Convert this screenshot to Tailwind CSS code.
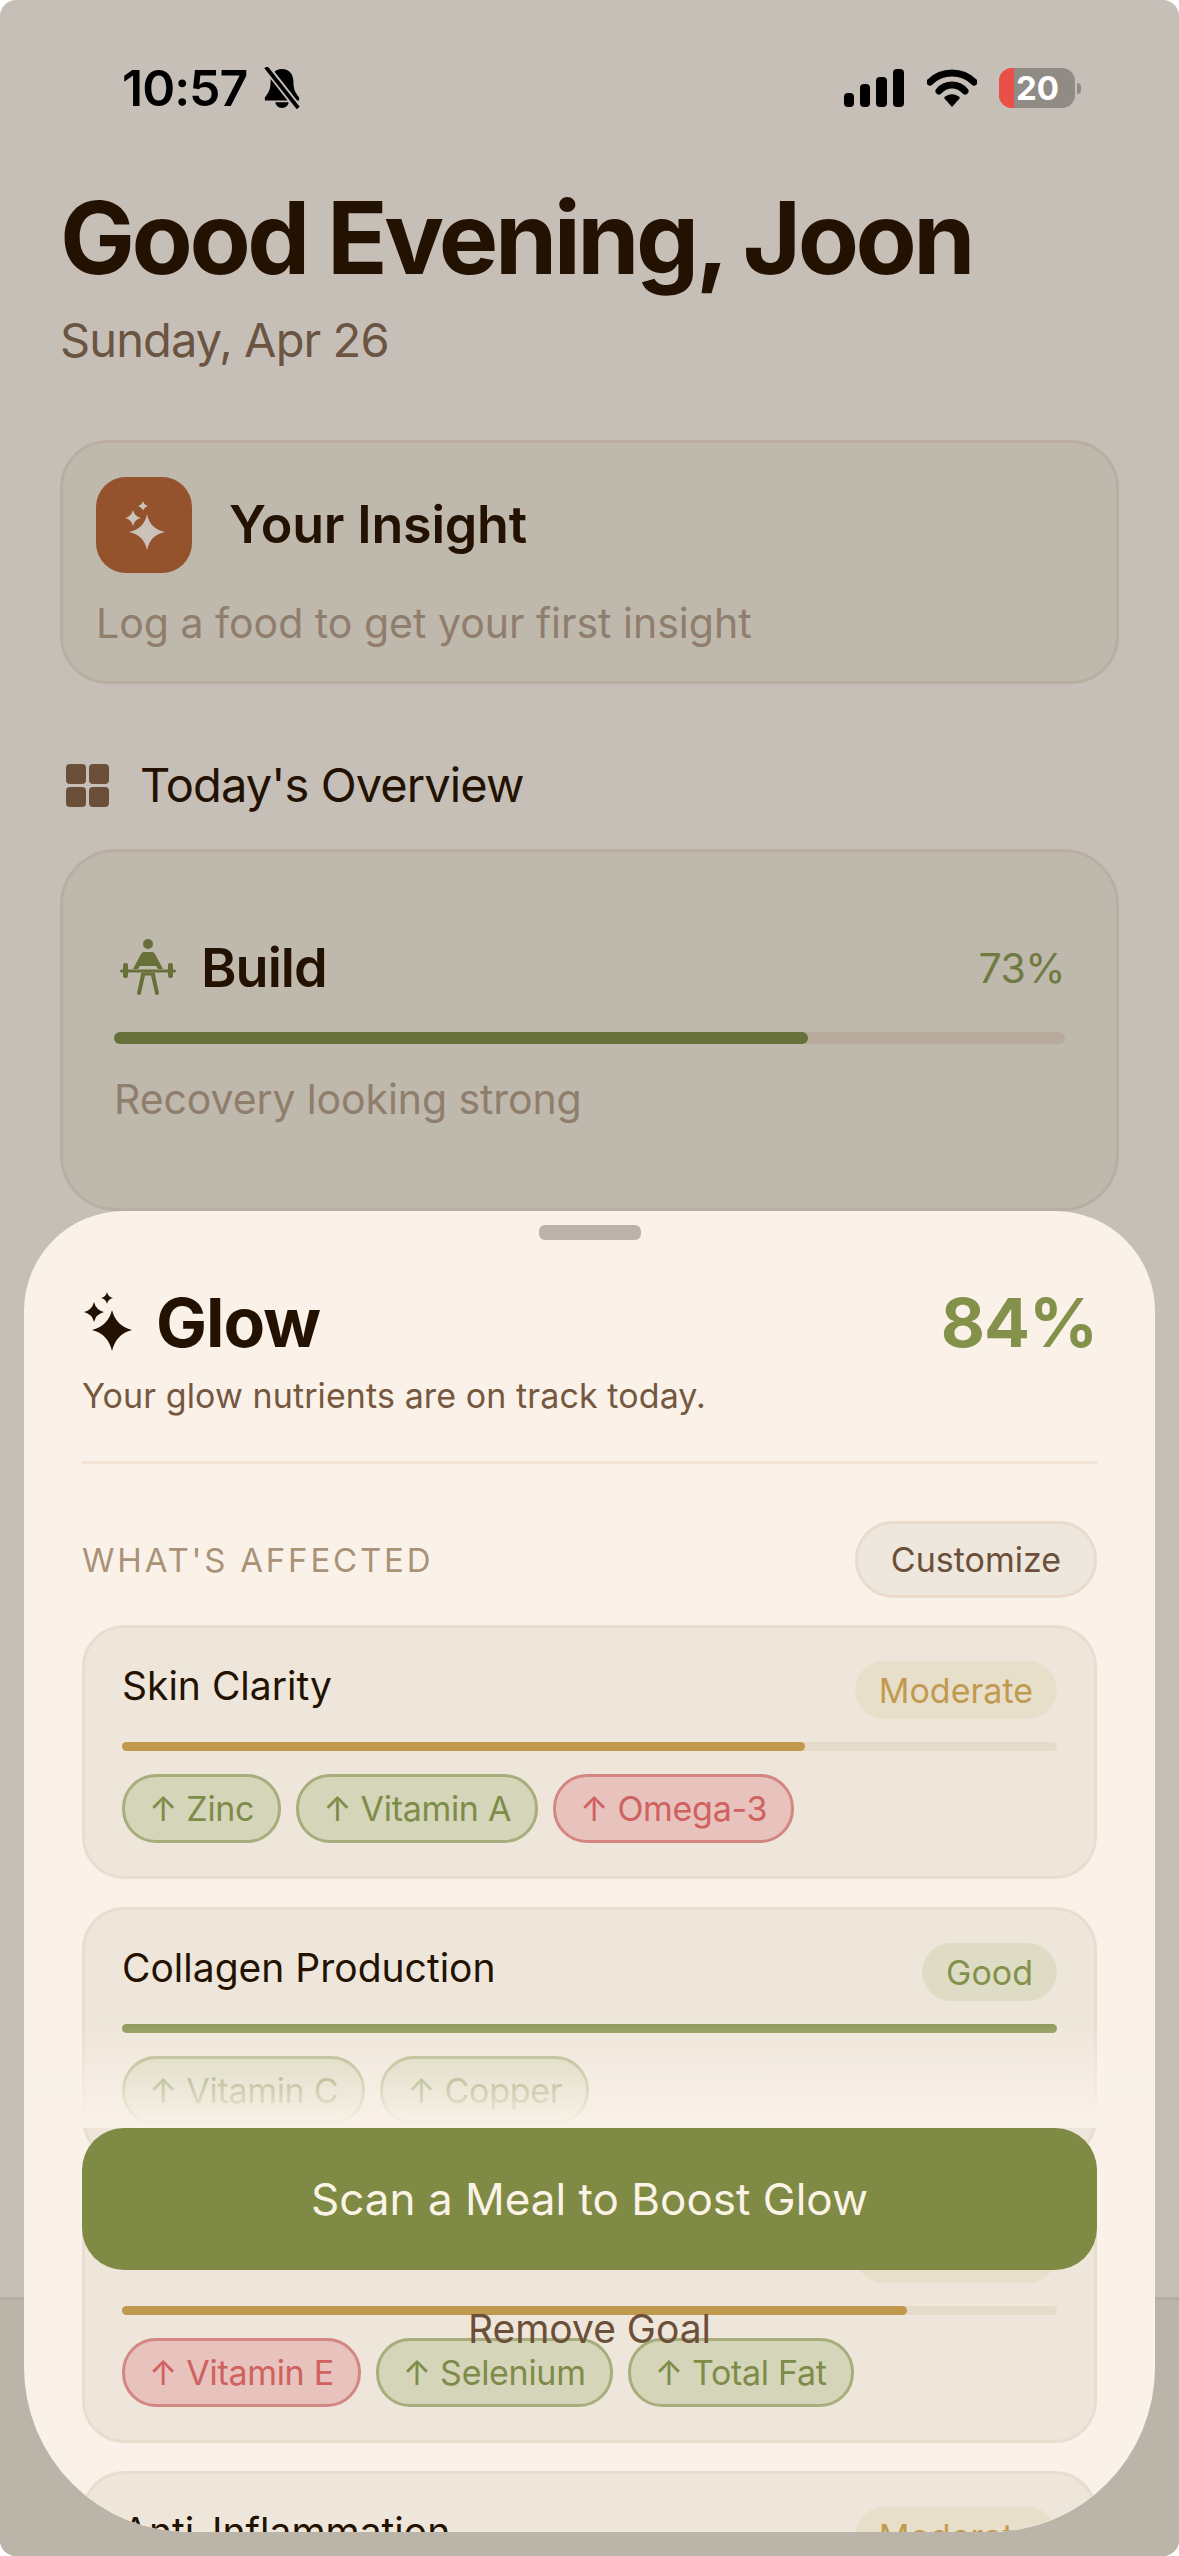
<!DOCTYPE html>
<html lang="en">

<head>
    <meta charset="UTF-8">
    <meta name="viewport" content="width=device-width, initial-scale=1.0">
    <title>Glow</title>
    <script src="https://cdn.jsdelivr.net/npm/@tailwindcss/browser@4"></script>
</head>

<body class="bg-white">
    <div class="relative w-[1179px] h-[2556px] overflow-hidden rounded-[16px] bg-[#c6bfb8] font-['Inter',sans-serif]">

        <!-- status bar -->
        <div class="flex items-center justify-between pl-[122px] pr-[98px] pt-[66px] h-[110px]">
            <div class="flex items-center gap-[15px]">
                <span class="text-[50px] leading-[44px] font-semibold tracking-[-1px] text-black">10:57</span>
                <svg width="40" height="42" viewBox="0 0 42 44">
                    <path d="M21 2c-8 0-12 6-12 13 0 9-2 12-6 17v3h36v-3c-4-5-6-8-6-17 0-7-4-13-12-13z" fill="#000" />
                    <path d="M14 37a7 6 0 0 0 14 0z" fill="#000" />
                    <path d="M5 1l33 42" stroke="#c6bfb8" stroke-width="8" />
                    <path d="M4 0l34 43" stroke="#000" stroke-width="4" />
                </svg>
            </div>
            <div class="flex items-center">
                <div class="flex items-end gap-[6px] h-[38px]">
                    <div class="w-[10px] h-[14px] rounded-[4px] bg-black"></div>
                    <div class="w-[10px] h-[23px] rounded-[4px] bg-black"></div>
                    <div class="w-[11px] h-[30px] rounded-[4px] bg-black"></div>
                    <div class="w-[11px] h-[38px] rounded-[4px] bg-black"></div>
                </div>
                <svg class="ml-[23px]" width="50" height="38" viewBox="0 0 50 38">
                    <path d="M3 13C15 1 35 1 47 13" fill="none" stroke="#000" stroke-width="7" stroke-linecap="round" />
                    <path d="M12 22C19 14 31 14 38 22" fill="none" stroke="#000" stroke-width="7" stroke-linecap="round" />
                    <path d="M17 29C21 24 29 24 33 29L25 38z" fill="#000" />
                </svg>
                <div class="relative ml-[22px] w-[76px] h-[40px] rounded-[13px] overflow-hidden bg-[#918b85] flex items-center justify-end pr-[16px]">
                    <div class="absolute left-0 top-0 bottom-0 w-[15px] bg-[#ea4f48]"></div>
                    <span class="relative text-[33px] leading-none font-bold text-white">20</span>
                </div>
                <div class="ml-[2px] w-[4px] h-[11px] rounded-r-full bg-[#918b85]"></div>
            </div>
        </div>

        <!-- greeting -->
        <div class="px-[60px]">
            <h1 class="mt-[76px] text-[100px] leading-[104px] font-bold tracking-[-3.5px] text-[#231202] whitespace-nowrap">Good Evening, Joon</h1>
            <p class="mt-[21px] text-[47px] leading-[58px] tracking-[-0.9px] text-[#6b5441]">Sunday, Apr 26</p>

            <!-- insight card -->
            <div class="mt-[71px] h-[244px] rounded-[48px] border-[3px] border-[#b9aea1] bg-[#bfb8ad] px-[33px] pt-[34px]">
                <div class="flex items-center gap-[37px]">
                    <div class="w-[96px] h-[96px] rounded-[30px] bg-[#94532c]">
                        <svg width="96" height="96" viewBox="0 0 96 96" fill="#cbc3ba">
                            <path d="M51 37Q54 52 69 55Q54 58 51 73Q48 58 33 55Q48 52 51 37z" />
                            <path d="M37 33Q38.500 39.500 45 41Q38.500 42.500 37 49Q35.500 42.500 29 41Q35.500 39.500 37 33z" />
                            <path d="M47 24Q48 28 52 29Q48 30 47 34Q46 30 42 29Q46 28 47 24z" />
                        </svg>
                    </div>
                    <span class="text-[52px] leading-[64px] font-semibold tracking-[-0.2px] text-[#231202]">Your Insight</span>
                </div>
                <p class="mt-[25px] text-[41px] leading-[50px] text-[#8f7e6c]">Log a food to get your first insight</p>
            </div>

            <!-- overview header -->
            <div class="mt-[73px] ml-[6px] flex items-center gap-[31px]">
                <div class="grid grid-cols-2 gap-[3px] w-[43px]">
                    <div class="h-[20px] rounded-[4px] bg-[#6b4f38]"></div>
                    <div class="h-[20px] rounded-[4px] bg-[#6b4f38]"></div>
                    <div class="h-[20px] rounded-[4px] bg-[#6b4f38]"></div>
                    <div class="h-[20px] rounded-[4px] bg-[#6b4f38]"></div>
                </div>
                <span class="text-[47px] leading-[56px] tracking-[-0.9px] text-[#231202]">Today's Overview</span>
            </div>

            <!-- build card -->
            <div class="mt-[36px] h-[362px] rounded-[56px] border-[3px] border-[#b9aea1] bg-[#bfb8ad] px-[51px] pt-[83px]">
                <div class="flex items-center justify-between">
                    <div class="flex items-center gap-[25px]">
                        <svg width="62" height="66" viewBox="14 16 62 66" fill="#667038">
                            <circle cx="48" cy="25" r="5" />
                            <path d="M44 33h8q2 0 3 2l8 15h-5l-2-3H40l-2 3h-5l8-15q1-2 3-2z" />
                            <rect x="20" y="50.500" width="56" height="3" rx="1.500" />
                            <rect x="23" y="44" width="5" height="15" rx="2" />
                            <rect x="68" y="44" width="5" height="15" rx="2" />
                            <path d="M41 55h14" stroke="#667038" stroke-width="3" />
                            <path d="M43 56L39 74M53 56L57 74" stroke="#667038" stroke-width="4" stroke-linecap="round" />
                        </svg>
                        <span class="text-[54px] leading-[64px] font-semibold tracking-[-1px] text-[#231202]">Build</span>
                    </div>
                    <span class="text-[41px] leading-[50px] tracking-[-0.5px] text-[#6f7a42]">73%</span>
                </div>
                <div class="mt-[31px] h-[12px] rounded-[6px] bg-[#b8aa9c]">
                    <div class="h-full w-[73%] rounded-[6px] bg-[#667038]"></div>
                </div>
                <p class="mt-[30px] text-[41px] leading-[50px] tracking-[-0.1px] text-[#8f7e6c]">Recovery looking strong</p>
            </div>
        </div>

        <!-- tab bar behind the sheet -->
        <div class="absolute left-0 right-0 bottom-0 h-[259px] border-t-[3px] border-[#b5aea3] bg-[#bbb4a9]"></div>

        <!-- sheet -->
        <div class="absolute left-[24px] top-[1211px] w-[1131px] h-[1321px] overflow-hidden rounded-t-[100px] rounded-b-[165px] bg-[#faf2e9]">
            <div class="mx-auto mt-[14px] w-[102px] h-[15px] rounded-[6px] bg-[#bbb2ab]"></div>

            <div class="px-[58px]">
                <div class="mt-[46px] flex items-center justify-between">
                    <div class="flex items-center gap-[18px]">
                        <svg width="56" height="60" viewBox="0 0 56 60" fill="#231202">
                            <path d="M30 18Q34 34 50 38Q34 42 30 59Q26 42 10 38Q26 34 30 18z" />
                            <path d="M12 10Q14 18 22 20Q14 22 12 30Q10 22 2 20Q10 18 12 10z" />
                            <path d="M25 0Q26 5 31 6Q26 7 25 12Q24 7 19 6Q24 5 25 0z" />
                        </svg>
                        <span class="text-[68px] leading-[72px] font-bold tracking-[-1px] text-[#231202]">Glow</span>
                    </div>
                    <span class="text-[68px] leading-[72px] font-bold tracking-[-1px] text-[#83914a]">84%</span>
                </div>
                <p class="mt-[16px] text-[34px] leading-[44px] tracking-[0.1px] text-[#75583f]">Your glow nutrients are on track today.</p>
                <div class="mt-[43px] h-[3px] bg-[#f2e3d6]"></div>

                <div class="mt-[57px] flex items-center justify-between">
                    <span class="text-[33px] leading-[40px] tracking-[2.8px] text-[#aa9278]">WHAT'S AFFECTED</span>
                    <div class="h-[77px] rounded-[38px] border-[3px] border-[#eadbcd] bg-[#eee7dd] px-[33px] flex items-center text-[34px] text-[#6b4f38]">Customize</div>
                </div>

                <div class="mt-[27px] flex flex-col gap-[28px]">
                    <!-- skin clarity -->
                    <div class="h-[254px] rounded-[42px] border-[3px] border-[#e9ddcf] bg-[#eee6da] px-[37px] pt-[33px]">
                        <div class="flex items-start justify-between">
                            <span class="text-[39px] leading-[50px] text-[#231202]">Skin Clarity</span>
                            <span class="h-[58px] rounded-[29px] bg-[#e8dfcb] px-[24px] flex items-center text-[34px] text-[#c19a50]">Moderate</span>
                        </div>
                        <div class="mt-[23px] h-[9px] rounded-full bg-[#e6dacb]">
                            <div class="h-full w-[73%] rounded-full bg-[#c0984e]"></div>
                        </div>
                        <div class="mt-[23px] flex gap-[15px]">
                            <span class="h-[69px] rounded-[34px] border-[3px] border-[#a8ad7c] bg-[#d5d5ba] px-[24px] flex items-center text-[34px] tracking-[-0.3px] text-[#7e8c4a]">↑ Zinc</span>
                            <span class="h-[69px] rounded-[34px] border-[3px] border-[#a8ad7c] bg-[#d5d5ba] px-[24px] flex items-center text-[34px] tracking-[-0.3px] text-[#7e8c4a]">↑ Vitamin A</span>
                            <span class="h-[69px] rounded-[34px] border-[3px] border-[#d48782] bg-[#e8c2bc] px-[24px] flex items-center text-[34px] tracking-[-0.3px] text-[#cf6160]">↑ Omega-3</span>
                        </div>
                    </div>

                    <!-- collagen -->
                    <div class="h-[254px] rounded-[42px] border-[3px] border-[#e9ddcf] bg-[#eee6da] px-[37px] pt-[33px]">
                        <div class="flex items-start justify-between">
                            <span class="text-[39px] leading-[50px] text-[#231202]">Collagen Production</span>
                            <span class="h-[58px] rounded-[29px] bg-[#dfdcc6] px-[24px] flex items-center text-[34px] text-[#83914a]">Good</span>
                        </div>
                        <div class="mt-[23px] h-[9px] rounded-full bg-[#8d9858]"></div>
                        <div class="mt-[23px] flex gap-[15px]">
                            <span class="h-[69px] rounded-[34px] border-[3px] border-[#a8ad7c] bg-[#d5d5ba] px-[24px] flex items-center text-[34px] tracking-[-0.3px] text-[#7e8c4a]">↑ Vitamin C</span>
                            <span class="h-[69px] rounded-[34px] border-[3px] border-[#a8ad7c] bg-[#d5d5ba] px-[24px] flex items-center text-[34px] tracking-[-0.3px] text-[#7e8c4a]">↑ Copper</span>
                        </div>
                    </div>

                    <!-- third card, title hidden by the button -->
                    <div class="h-[254px] rounded-[42px] border-[3px] border-[#e9ddcf] bg-[#eee6da] px-[37px] pt-[33px]">
                        <div class="flex items-start justify-between">
                            <span class="text-[39px] leading-[50px] text-[#231202]">Skin Barrier</span>
                            <span class="h-[58px] rounded-[29px] bg-[#e8dfcb] px-[24px] flex items-center text-[34px] text-[#c19a50]">Moderate</span>
                        </div>
                        <div class="mt-[23px] h-[9px] rounded-full bg-[#e6dacb]">
                            <div class="h-full w-[84%] rounded-full bg-[#c0984e]"></div>
                        </div>
                        <div class="mt-[23px] flex gap-[15px]">
                            <span class="h-[69px] rounded-[34px] border-[3px] border-[#d48782] bg-[#e8c2bc] px-[24px] flex items-center text-[34px] tracking-[-0.3px] text-[#cf6160]">↑ Vitamin E</span>
                            <span class="h-[69px] rounded-[34px] border-[3px] border-[#a8ad7c] bg-[#d5d5ba] px-[24px] flex items-center text-[34px] tracking-[-0.3px] text-[#7e8c4a]">↑ Selenium</span>
                            <span class="h-[69px] rounded-[34px] border-[3px] border-[#a8ad7c] bg-[#d5d5ba] px-[24px] flex items-center text-[34px] tracking-[-0.3px] text-[#7e8c4a]">↑ Total Fat</span>
                        </div>
                    </div>

                    <!-- anti-inflammation, cut off by the sheet -->
                    <div class="h-[254px] shrink-0 rounded-[42px] border-[3px] border-[#e9ddcf] bg-[#eee6da] px-[37px] pt-[33px]">
                        <div class="flex items-start justify-between">
                            <span class="text-[39px] leading-[50px] text-[#231202]">Anti-Inflammation</span>
                            <span class="h-[58px] rounded-[29px] bg-[#e8dfcb] px-[24px] flex items-center text-[34px] text-[#c19a50]">Moderate</span>
                        </div>
                    </div>
                </div>
            </div>

            <!-- fade and floating actions -->
            <div class="absolute left-0 right-0 top-[809px] h-[108px] bg-gradient-to-b from-[#faf2e9]/0 to-[#faf2e9]"></div>
            <div class="absolute left-[58px] right-[58px] top-[917px] h-[142px] rounded-[42px] bg-[#7f8a45] flex items-center justify-center text-[44px] text-[#faf3e6]">Scan a Meal to Boost Glow</div>
            <div class="absolute left-0 right-0 top-[1093px] text-center text-[39px] leading-[50px] text-[#6b4f38]">Remove Goal</div>
        </div>
    </div>
</body>

</html>
